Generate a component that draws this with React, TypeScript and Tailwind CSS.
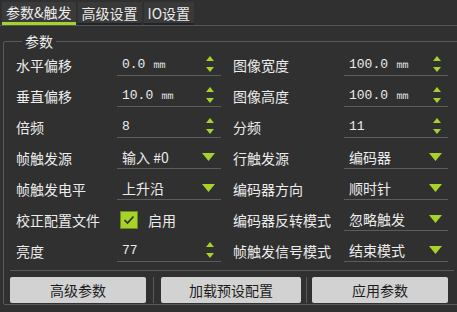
import React from "react";

const G = "#a6d22a";

function Spin() {
  return (
    <svg width="10" height="18" viewBox="0 0 10 18" className="shrink-0">
      <polygon points="5,1 9,6 1,6" fill={G} />
      <polygon points="1,12 9,12 5,17" fill={G} />
    </svg>
  );
}

function Drop() {
  return (
    <svg width="13" height="9" viewBox="0 0 13 9" className="shrink-0">
      <polygon points="0,0 13,0 6.5,8" fill={G} />
    </svg>
  );
}

type F = { kind: "spin" | "drop" | "check"; value: string };

function Field({ f }: { f: F }) {
  if (f.kind === "check") {
    return (
      <div className="w-[104px] h-[22px] flex items-center gap-[10px] pl-[3px]">
        <div className="w-[18px] h-[18px] bg-[#a6d22a] border border-[#6b8a18] flex items-center justify-center">
          <svg width="12" height="10" viewBox="0 0 12 10">
            <polyline points="1.5,5 4.5,8 10.5,1.5" fill="none" stroke="#2a3010" strokeWidth="1.6" />
          </svg>
        </div>
        <span>{f.value}</span>
      </div>
    );
  }
  return (
    <div className="w-[104px] h-[22px] flex items-center justify-between border-b border-[#5c5c5c] pl-[5px] pr-[6px]">
      <span className={f.kind === "spin" ? "font-['Liberation_Mono','DejaVu_Sans_Mono',monospace] text-[13px]" : ""}>
        {f.value}
      </span>
      {f.kind === "spin" ? <Spin /> : <Drop />}
    </div>
  );
}

const left: [string, F][] = [
  ["水平偏移", { kind: "spin", value: "0.0 ㎜" }],
  ["垂直偏移", { kind: "spin", value: "10.0 ㎜" }],
  ["倍频", { kind: "spin", value: "8" }],
  ["帧触发源", { kind: "drop", value: "输入 #0" }],
  ["帧触发电平", { kind: "drop", value: "上升沿" }],
  ["校正配置文件", { kind: "check", value: "启用" }],
  ["亮度", { kind: "spin", value: "77" }],
];
const right: [string, F][] = [
  ["图像宽度", { kind: "spin", value: "100.0 ㎜" }],
  ["图像高度", { kind: "spin", value: "100.0 ㎜" }],
  ["分频", { kind: "spin", value: "11" }],
  ["行触发源", { kind: "drop", value: "编码器" }],
  ["编码器方向", { kind: "drop", value: "顺时针" }],
  ["编码器反转模式", { kind: "drop", value: "忽略触发" }],
  ["帧触发信号模式", { kind: "drop", value: "结束模式" }],
];

export default function App() {
  return (
    <div className="w-[457px] h-[312px] bg-[#303030] text-[#ececec] text-[14px] leading-none font-['Noto_Sans_CJK_SC',sans-serif] overflow-hidden">
      <div className="flex items-end gap-[2px] pl-[2px] pt-[2px] h-[26px] border-b border-[#555555]">
        <div className="h-[23px] px-[4px] flex items-center bg-[#3a3a3a] border-b-[3px] border-[#a6d22a]">参数&amp;触发</div>
        <div className="h-[23px] px-[4px] flex items-center bg-[#393939] border-b-[2px] border-[#1e262c]">高级设置</div>
        <div className="h-[23px] px-[4px] flex items-center bg-[#393939] border-b-[2px] border-[#1e262c]">IO设置</div>
      </div>
      <fieldset className="mx-[3px] mt-[8px] h-[271px] border border-[#5a5a5a] rounded-[2px] px-[12px]">
        <legend className="px-[3px] ml-[6px] text-[14px]">参数</legend>
        <div className="flex gap-[12px] pt-[1px]">
          {[left, right].map((col, ci) => (
            <div key={ci} className="flex flex-col">
              {col.map(([label, f]) => (
                <div key={label} className="h-[31px] flex items-center">
                  <div className={ci === 0 ? "w-[101px]" : "w-[111px]"}>{label}</div>
                  <Field f={f} />
                </div>
              ))}
            </div>
          ))}
        </div>
        <div className="mt-[4px] ml-[-6px] mr-[-6px] border-t border-[#5a5a5a]" />
        <div className="flex items-center mt-[5px] ml-[-6px] mr-[-6px] h-[27px] text-[#1c1c1c]">
          <div className="w-[136px] h-[26px] bg-[#d2d2d2] rounded-[2px] flex items-center justify-center">高级参数</div>
          <div className="w-px h-[26px] bg-[#5a5a5a] mx-[7px]" />
          <div className="w-[140px] h-[26px] bg-[#d2d2d2] rounded-[2px] flex items-center justify-center">加载预设配置</div>
          <div className="w-px h-[26px] bg-[#5a5a5a] mx-[5px]" />
          <div className="w-[136px] h-[26px] bg-[#d2d2d2] rounded-[2px] flex items-center justify-center">应用参数</div>
        </div>
      </fieldset>
    </div>
  );
}
